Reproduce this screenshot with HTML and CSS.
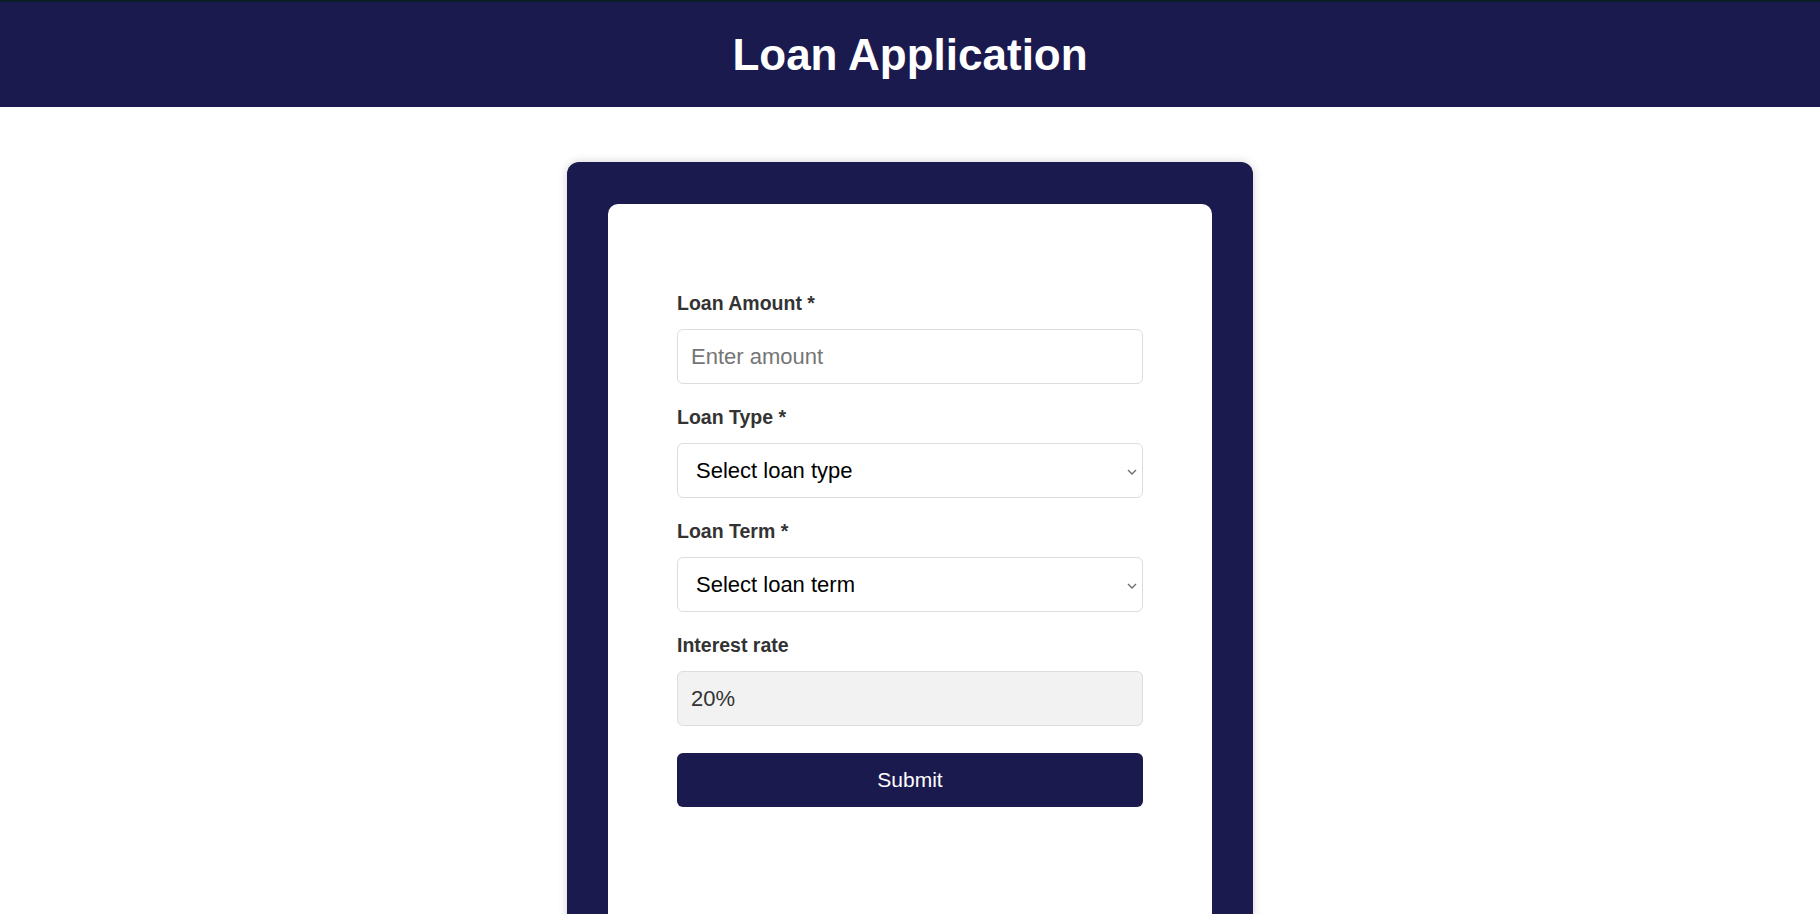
FILE: index.html
```html
<!DOCTYPE html>
<html lang="en">
<head>
<meta charset="UTF-8">
<title>Loan Application</title>
<link rel="stylesheet" href="styles.css">
</head>
<body>
<header class="topbar">
  <h1 class="title">Loan Application</h1>
</header>
<main class="page">
  <section class="card">
    <div class="card-inner">
      <form class="loan-form">
        <div class="form-group">
          <label class="label" for="amount">Loan Amount *</label>
          <input class="field" id="amount" type="text" placeholder="Enter amount">
        </div>
        <div class="form-group">
          <label class="label" for="type">Loan Type *</label>
          <div class="select-wrap">
            <select class="field select" id="type">
              <option>Select loan type</option>
            </select>
            <svg class="chevron" width="10" height="6" viewBox="0 0 10 6" aria-hidden="true"><path d="M1 1l4 4 4-4" fill="none" stroke="#6e6e6e" stroke-width="1.4"/></svg>
          </div>
        </div>
        <div class="form-group">
          <label class="label" for="term">Loan Term *</label>
          <div class="select-wrap">
            <select class="field select" id="term">
              <option>Select loan term</option>
            </select>
            <svg class="chevron" width="10" height="6" viewBox="0 0 10 6" aria-hidden="true"><path d="M1 1l4 4 4-4" fill="none" stroke="#6e6e6e" stroke-width="1.4"/></svg>
          </div>
        </div>
        <div class="form-group">
          <label class="label" for="rate">Interest rate</label>
          <input class="field readonly" id="rate" type="text" value="20%" readonly>
        </div>
        <button class="submit" type="button">Submit</button>
      </form>
    </div>
  </section>
</main>
</body>
</html>
```

FILE: styles.css
```css
* {
  box-sizing: border-box;
}

html, body {
  margin: 0;
  padding: 0;
  background: #ffffff;
  font-family: "Liberation Sans", Arial, sans-serif;
}

.topbar {
  height: 107px;
  border-top: 2px solid #0b1f26;
  background: #1b1a4f;
  display: flex;
  align-items: center;
  justify-content: center;
}

.title {
  margin: 0;
  color: #ffffff;
  font-size: 44px;
  font-weight: bold;
}

.page {
  display: flex;
  justify-content: center;
  padding-top: 55px;
}

.card {
  width: 686px;
  background: #1b1a4f;
  border-radius: 12px;
  padding: 42px 41px 0 41px;
  box-shadow: 0 0 10px rgba(0, 0, 0, 0.18);
}

.card-inner {
  background: #ffffff;
  border-radius: 10px;
  padding: 88px 69px 140px 69px;
}

.loan-form {
  display: flex;
  flex-direction: column;
}

.form-group {
  display: flex;
  flex-direction: column;
  margin-bottom: 22px;
}

.label {
  font-size: 19.5px;
  font-weight: bold;
  color: #333333;
  margin-bottom: 14px;
}

.field {
  height: 55px;
  width: 100%;
  border: 1px solid #dddddd;
  border-radius: 6px;
  padding: 0 13px;
  font-family: "Liberation Sans", Arial, sans-serif;
  font-size: 22px;
  color: #000000;
  background-color: #ffffff;
  outline: none;
}

.field::placeholder {
  color: #757575;
}

.select-wrap {
  position: relative;
}

.select {
  display: block;
  appearance: none;
  -webkit-appearance: none;
  padding-left: 18px;
  padding-right: 30px;
}

.chevron {
  position: absolute;
  right: 6px;
  top: 50%;
  margin-top: -2px;
  pointer-events: none;
}

.readonly {
  background-color: #f2f2f2;
  color: #333333;
}

.submit {
  margin-top: 5px;
  height: 54px;
  width: 100%;
  border: none;
  border-radius: 6px;
  background: #1b1a4f;
  color: #ffffff;
  font-family: "Liberation Sans", Arial, sans-serif;
  font-size: 21px;
  cursor: pointer;
}
```
